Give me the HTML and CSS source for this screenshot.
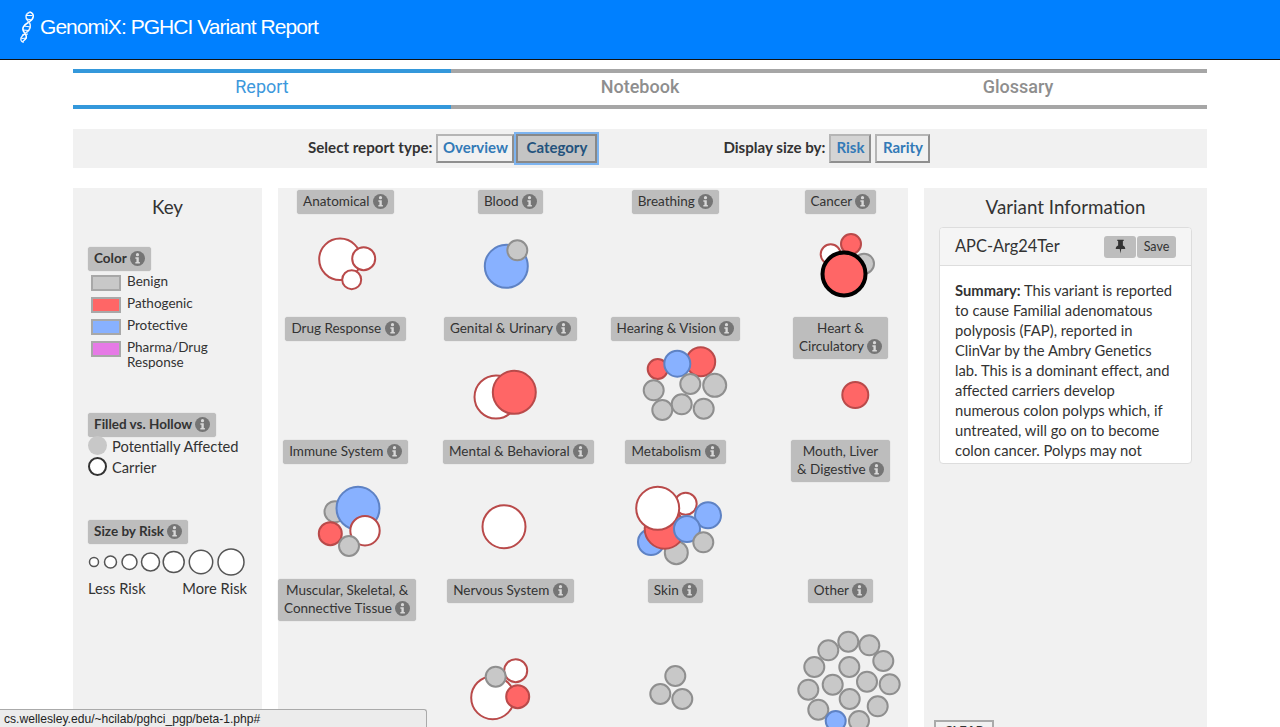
FILE: index.html
```html
<!DOCTYPE html>
<html lang="en">
<head>
<meta charset="utf-8">
<title>GenomiX: PGHCI Variant Report</title>
<link rel="stylesheet" href="styles.css">
</head>
<body>
<svg class="defs" width="0" height="0">
  <symbol id="info" viewBox="0 0 14 14">
    <circle cx="7" cy="7" r="7" fill="#757575"/>
    <circle cx="7" cy="3.4" r="1.5" fill="#d8d8d8"/>
    <path d="M5 5.9h3.2v4.4h1v1.4H5v-1.4h1V7.3H5z" fill="#d8d8d8"/>
  </symbol>
</svg>
<header class="topbar">
  <svg class="logo" viewBox="0 0 16 32" width="16" height="32">
    <path d="M11 1C16 3 15 8 10 11S2 17 5 21S9 27 3 31" fill="none" stroke="#fff" stroke-width="1.5"/>
    <path d="M11 1C6 3 6 7 9 10S12 16 10 19S3 23 2 27S4 31 5 31" fill="none" stroke="#e3efff" stroke-width="1.5"/>
    <path d="M7 4.500l6.500 0M7.500 8l5.500 1M5 15l6.500 1M4 19l6 .5M3 24l6-1M2.500 27.500l5.500-.5" stroke="#fff" stroke-width="1"/>
  </svg>
  <h1 class="brand">GenomiX: PGHCI Variant Report</h1>
</header>
<main class="page">
  <nav class="tabs">
    <a class="tab tab-active">Report</a>
    <a class="tab">Notebook</a>
    <a class="tab">Glossary</a>
  </nav>
  <section class="toolbar">
    <span class="tool-label">Select report type:</span>
    <button class="btn btn-overview">Overview</button>
    <button class="btn btn-on">Category</button>
    <span class="tool-label tool-second">Display size by:</span>
    <button class="btn btn-risk">Risk</button>
    <button class="btn btn-rarity">Rarity</button>
  </section>
  <div class="columns">
    <aside class="panel key">
      <h2 class="panel-title key-title">Key</h2>
      <div class="pill pill-bold key-color">Color <svg class="i"><use href="#info"/></svg></div>
      <ul class="swatches">
        <li><span class="swatch sw-benign"></span><span class="sw-text">Benign</span></li>
        <li><span class="swatch sw-path"></span><span class="sw-text">Pathogenic</span></li>
        <li><span class="swatch sw-prot"></span><span class="sw-text">Protective</span></li>
        <li><span class="swatch sw-drug"></span><span class="sw-text">Pharma/Drug<br>Response</span></li>
      </ul>
      <div class="pill pill-bold key-fill">Filled vs. Hollow <svg class="i"><use href="#info"/></svg></div>
      <div class="fill-row"><span class="dot dot-filled"></span>Potentially Affected</div>
      <div class="fill-row"><span class="dot dot-hollow"></span>Carrier</div>
      <div class="pill pill-bold key-size">Size by Risk <svg class="i"><use href="#info"/></svg></div>
      <svg class="sizes" viewBox="88 546 165 32" width="165" height="32">
        <g class="k"><circle cx="94" cy="562" r="4.5"/><circle cx="110.5" cy="562" r="6"/><circle cx="129.5" cy="562" r="7.5"/><circle cx="150.5" cy="562" r="9"/><circle cx="173.7" cy="562" r="10.5"/><circle cx="201" cy="562" r="11.7"/><circle cx="231" cy="562" r="13"/></g>
      </svg>
      <div class="risk-ends"><span>Less Risk</span><span>More Risk</span></div>
    </aside>
    <section class="panel chart">
      <div class="grid">
        <div class="cell"><div class="pill">Anatomical <svg class="i"><use href="#info"/></svg></div>
          <svg class="bub" viewBox="263 190 165 127"><circle class="w" cx="340" cy="259.3" r="20.8"/><circle class="w" cx="363.7" cy="258.7" r="11.5"/><circle class="w" cx="351.7" cy="279.7" r="9.5"/></svg></div>
        <div class="cell"><div class="pill">Blood <svg class="i"><use href="#info"/></svg></div>
          <svg class="bub" viewBox="428 190 165 127"><circle class="b" cx="506.3" cy="266.3" r="21.5"/><circle class="g" cx="517.3" cy="250.3" r="10"/></svg></div>
        <div class="cell"><div class="pill">Breathing <svg class="i"><use href="#info"/></svg></div>
          <svg class="bub" viewBox="593 190 165 127"></svg></div>
        <div class="cell"><div class="pill">Cancer <svg class="i"><use href="#info"/></svg></div>
          <svg class="bub" viewBox="758 190 165 127"><circle class="w" cx="830.7" cy="254.3" r="10"/><circle class="g" cx="864" cy="263.7" r="10"/><circle class="r" cx="851" cy="244" r="10"/><circle class="r sel" cx="844" cy="274" r="21.5"/></svg></div>

        <div class="cell"><div class="pill">Drug Response <svg class="i"><use href="#info"/></svg></div>
          <svg class="bub" viewBox="263 317 165 123"></svg></div>
        <div class="cell"><div class="pill">Genital &amp; Urinary <svg class="i"><use href="#info"/></svg></div>
          <svg class="bub" viewBox="428 317 165 123"><circle class="w" cx="496" cy="397" r="21.5"/><circle class="r" cx="514.3" cy="392.3" r="21.5"/></svg></div>
        <div class="cell"><div class="pill">Hearing &amp; Vision <svg class="i"><use href="#info"/></svg></div>
          <svg class="bub" viewBox="593 317 165 123"><circle class="r" cx="700.7" cy="361.7" r="14.5"/><circle class="r" cx="657.7" cy="369" r="10"/><circle class="b" cx="677.3" cy="363.7" r="13"/><circle class="g" cx="690.3" cy="384" r="10"/><circle class="g" cx="714.7" cy="385.3" r="11.5"/><circle class="g" cx="653.7" cy="390.3" r="10"/><circle class="g" cx="681.7" cy="404.3" r="10"/><circle class="g" cx="662.3" cy="410" r="10"/><circle class="g" cx="703.7" cy="408.7" r="10"/></svg></div>
        <div class="cell"><div class="pill">Heart &amp;<br>Circulatory <svg class="i"><use href="#info"/></svg></div>
          <svg class="bub" viewBox="758 317 165 123"><circle class="r" cx="855.3" cy="395" r="13"/></svg></div>

        <div class="cell"><div class="pill">Immune System <svg class="i"><use href="#info"/></svg></div>
          <svg class="bub" viewBox="263 440 165 139"><circle class="g" cx="335" cy="511.7" r="10.5"/><circle class="b" cx="358" cy="508.3" r="21.5"/><circle class="w" cx="365" cy="530.7" r="14.7"/><circle class="r" cx="330.3" cy="533.7" r="11.5"/><circle class="g" cx="349" cy="546" r="10"/></svg></div>
        <div class="cell"><div class="pill">Mental &amp; Behavioral <svg class="i"><use href="#info"/></svg></div>
          <svg class="bub" viewBox="428 440 165 139"><circle class="w" cx="504" cy="526.7" r="21.5"/></svg></div>
        <div class="cell"><div class="pill">Metabolism <svg class="i"><use href="#info"/></svg></div>
          <svg class="bub" viewBox="593 440 165 139"><circle class="w" cx="685.7" cy="503.7" r="11"/><circle class="b" cx="651" cy="542" r="13"/><circle class="g" cx="676.3" cy="552.7" r="11.5"/><circle class="r" cx="664.7" cy="528.7" r="20"/><circle class="w" cx="657.7" cy="508.3" r="21.5"/><circle class="b" cx="708" cy="515.3" r="13"/><circle class="b" cx="687" cy="529" r="13"/><circle class="g" cx="703.3" cy="542.3" r="10"/></svg></div>
        <div class="cell"><div class="pill">Mouth, Liver<br>&amp; Digestive <svg class="i"><use href="#info"/></svg></div>
          <svg class="bub" viewBox="758 440 165 139"></svg></div>

        <div class="cell"><div class="pill">Muscular, Skeletal, &amp;<br>Connective Tissue <svg class="i"><use href="#info"/></svg></div>
          <svg class="bub" viewBox="263 579 165 160"></svg></div>
        <div class="cell"><div class="pill">Nervous System <svg class="i"><use href="#info"/></svg></div>
          <svg class="bub" viewBox="428 579 165 160"><circle class="w" cx="515.7" cy="670.7" r="11.5"/><circle class="w" cx="492.7" cy="697.7" r="21.5"/><circle class="g" cx="495.7" cy="676.7" r="10"/><circle class="r" cx="517.7" cy="696.7" r="11.5"/></svg></div>
        <div class="cell"><div class="pill">Skin <svg class="i"><use href="#info"/></svg></div>
          <svg class="bub" viewBox="593 579 165 160"><circle class="g" cx="675.3" cy="676" r="10"/><circle class="g" cx="660.3" cy="694" r="10"/><circle class="g" cx="682.3" cy="699" r="10"/></svg></div>
        <div class="cell"><div class="pill">Other <svg class="i"><use href="#info"/></svg></div>
          <svg class="bub" viewBox="758 579 165 160"><circle class="g" cx="848.3" cy="641.7" r="10"/><circle class="g" cx="869.3" cy="645.3" r="10"/><circle class="g" cx="828.3" cy="650.3" r="10"/><circle class="g" cx="883.3" cy="661" r="10"/><circle class="g" cx="814.3" cy="667" r="10"/><circle class="g" cx="849.3" cy="667" r="10"/><circle class="g" cx="867" cy="681.7" r="10"/><circle class="g" cx="889.7" cy="684.3" r="10"/><circle class="g" cx="832.7" cy="684.7" r="10"/><circle class="g" cx="808.3" cy="689.7" r="10"/><circle class="g" cx="849.7" cy="699" r="10"/><circle class="g" cx="877.7" cy="706.3" r="10"/><circle class="g" cx="818.3" cy="709.7" r="10"/><circle class="g" cx="859" cy="721" r="10"/><circle class="b" cx="835.7" cy="721" r="10"/></svg></div>
      </div>
    </section>
    <aside class="panel info">
      <h2 class="panel-title">Variant Information</h2>
      <article class="card">
        <div class="card-head">
          <h3 class="card-title">APC-Arg24Ter</h3>
          <button class="mini mini-pin" aria-label="Pin">
            <svg viewBox="0 0 12 16" width="11" height="15"><path d="M2.5 0.5h7v1.4H8.6v5c1.6.7 2.6 2 2.6 3.7H6.8L6 15.5l-.8-4.9H.8c0-1.700 1-3 2.600-3.700v-5H2.500z" fill="#333"/></svg>
          </button>
          <button class="mini mini-save">Save</button>
        </div>
        <div class="card-body">
          <p><b>Summary:</b> This variant is reported<br>to cause Familial adenomatous<br>polyposis (FAP), reported in<br>ClinVar by the Ambry Genetics<br>lab. This is a dominant effect, and<br>affected carriers develop<br>numerous colon polyps which, if<br>untreated, will go on to become<br>colon cancer. Polyps may not<br>appear until later in life.</p>
        </div>
      </article>
      <button class="clear">CLEAR</button>
    </aside>
  </div>
</main>
<div class="status">cs.wellesley.edu/~hcilab/pghci_pgp/beta-1.php#</div>
</body>
</html>
```
FILE: styles.css
```css
* { box-sizing: border-box; }
html, body { margin: 0; padding: 0; height: 727px; overflow: hidden; background: #fff; }
body { font-family: "Lato", "Open Sans", sans-serif; color: #333; font-size: 14px; }
.defs { position: absolute; }

.topbar { height: 60px; background: #0080ff; border-bottom: 1px solid #111; display: flex; align-items: center; padding: 0 0 5px 19px; gap: 5px; }
.logo { flex: none; }
.brand { margin: 0; font: 400 21px "Liberation Sans", Arial, sans-serif; color: #fff; letter-spacing: -0.95px; }

.page { padding: 9px 73px 0; }
.tabs { display: grid; grid-template-columns: repeat(3, 378px); }
.tab { height: 40px; padding-bottom: 6px; border-top: 4px solid #a6a6a6; border-bottom: 4px solid #a6a6a6; display: flex; align-items: center; justify-content: center; font: 500 18px "Roboto", "Liberation Sans", sans-serif; color: #8e8e8e; }
.tab-active { border-color: #3498db; color: #3c98dc; font-weight: 400; }

.toolbar { margin-top: 20px; height: 39px; background: #f1f1f1; display: flex; align-items: center; padding-left: 235px; }
.tool-label { font-weight: 700; font-size: 15.1px; color: #333; margin-right: 4px; padding-bottom: 3px; }
.tool-second { margin-left: 126px; }
.btn { height: 29px; padding: 0 0 3px; margin-right: 2px; border: 2px solid; border-color: #b5b5b5 #8f8f8f #8f8f8f #b5b5b5; background: #f1f1f1; color: #337ab7; font: 700 15px "Lato", sans-serif; }
.btn-overview { width: 78px; }
.btn-on { width: 81px; background: #c4c4c4; color: #23527c; outline: 2px solid #7db4f0; border-color: #888; margin-right: 0; }
.btn-risk { width: 42px; margin-right: 4px; background: #d4d4d4; }
.btn-rarity { width: 55px; }

.columns { margin-top: 20px; display: grid; grid-template-columns: 189px 630px 283px; column-gap: 16px; }
.panel { background: #f1f1f1; height: 560px; }
.panel-title { margin: 0; text-align: center; font-weight: 400; font-size: 18.8px; line-height: 24px; padding-top: 7px; padding-bottom: 1px; color: #333; }
.key-title { margin-left: -15px; }

.pill { display: block; width: max-content; background: #bdbdbd; border-radius: 3px; box-shadow: 0 0 1px #aaa; padding: 2px 6px 4px; font-size: 13.5px; line-height: 18px; text-align: center; color: #333; white-space: nowrap; }
.pill-bold { font-weight: 700; }
.i { width: 15px; height: 15px; vertical-align: -2.5px; }

.key { padding: 0 0 0 15px; }
.key-color { margin-top: 27px; }
.swatches { list-style: none; margin: 4px 0 0; padding: 0 0 0 3px; font-size: 13.5px; line-height: 15px; }
.swatches li { display: flex; align-items: flex-start; gap: 6px; min-height: 22px; }
.sw-text { margin-top: -1px; }
.swatch { flex: none; width: 30px; height: 16px; border: 2px solid #a8a8a8; }
.sw-benign { background: #c8c8c8; }
.sw-path { background: #ff6666; }
.sw-prot { background: #88b1ff; }
.sw-drug { background: #e67ae6; }
.key-fill { margin-top: 43px; margin-bottom: -2px; }
.fill-row { display: flex; align-items: center; gap: 5px; font-size: 14.7px; height: 21px; }
.dot { width: 19px; height: 19px; border-radius: 50%; flex: none; }
.dot-filled { background: #c8c8c8; }
.dot-hollow { background: #fff; border: 2px solid #333; }
.key-size { margin-top: 43px; }
.sizes { display: block; margin: 2px 0 0; overflow: visible; }
.k circle { fill: #fff; stroke: #555; stroke-width: 1.5; }
.risk-ends { display: flex; justify-content: space-between; font-size: 14.7px; line-height: 18px; width: 159px; margin-top: 1px; }

.chart { overflow: visible; padding-top: 2px; }
.grid { margin: 0 -15px; display: grid; grid-template-columns: repeat(4, 165px); grid-template-rows: 127px 123px 139px 160px; }
.cell { display: grid; grid-template-columns: 135px; padding: 0 15px; }
.cell > * { grid-area: 1 / 1; }
.cell .pill { justify-self: safe center; align-self: start; z-index: 1; }
.bub { width: 165px; margin-left: -15px; display: block; }
.cell:nth-child(n+1) .bub { height: 127px; }
.cell:nth-child(n+5) .bub { height: 123px; }
.cell:nth-child(n+9) .bub { height: 139px; }
.cell:nth-child(n+13) .bub { height: 160px; }
.bub circle { stroke-width: 2; }
.w { fill: #fff; stroke: #b94a4a; }
.r { fill: #ff6666; stroke: #b94a4a; }
.b { fill: #88b1ff; stroke: #5e82c4; }
.g { fill: #c8c8c8; stroke: #8f8f8f; }
.bub circle.sel { stroke: #000; stroke-width: 4; }

.info { padding: 0 15px; }
.card { margin-top: 7px; height: 237px; background: #fff; border: 1px solid #ddd; border-radius: 4px; overflow: hidden; }
.card-head { height: 38px; background: #f5f5f5; border-bottom: 1px solid #ddd; display: flex; align-items: center; padding: 0 15px; gap: 1px; }
.card-title { margin: 0 auto 3px 0; font-weight: 400; font-size: 16.4px; color: #333; }
.mini { height: 22px; border: 0; border-radius: 3px; background: #bdbdbd; font: 400 12.5px "Lato", sans-serif; color: #333; padding: 0; display: flex; align-items: center; justify-content: center; }
.mini-pin { width: 32px; }
.mini-save { width: 39px; }
.card-body { padding: 14px 15px 15px; white-space: nowrap; }
.card-body p { margin: 0; font-size: 14.75px; line-height: 20px; color: #333; }
.clear { margin: 256px 0 0 -5px; width: 60px; height: 21px; padding: 0; background: #f1f1f1; border: 2px solid #aaa; font: 700 13px "Lato", sans-serif; color: #333; display: block; }

.status { position: fixed; left: 0; bottom: 0; width: 427px; height: 18px; background: #ececec; border: 1px solid #aaa; border-left: 0; border-bottom: 0; border-top-right-radius: 3px; font: 12.1px/18px "Liberation Sans", Arial, sans-serif; color: #222; padding-left: 4px; }
```
